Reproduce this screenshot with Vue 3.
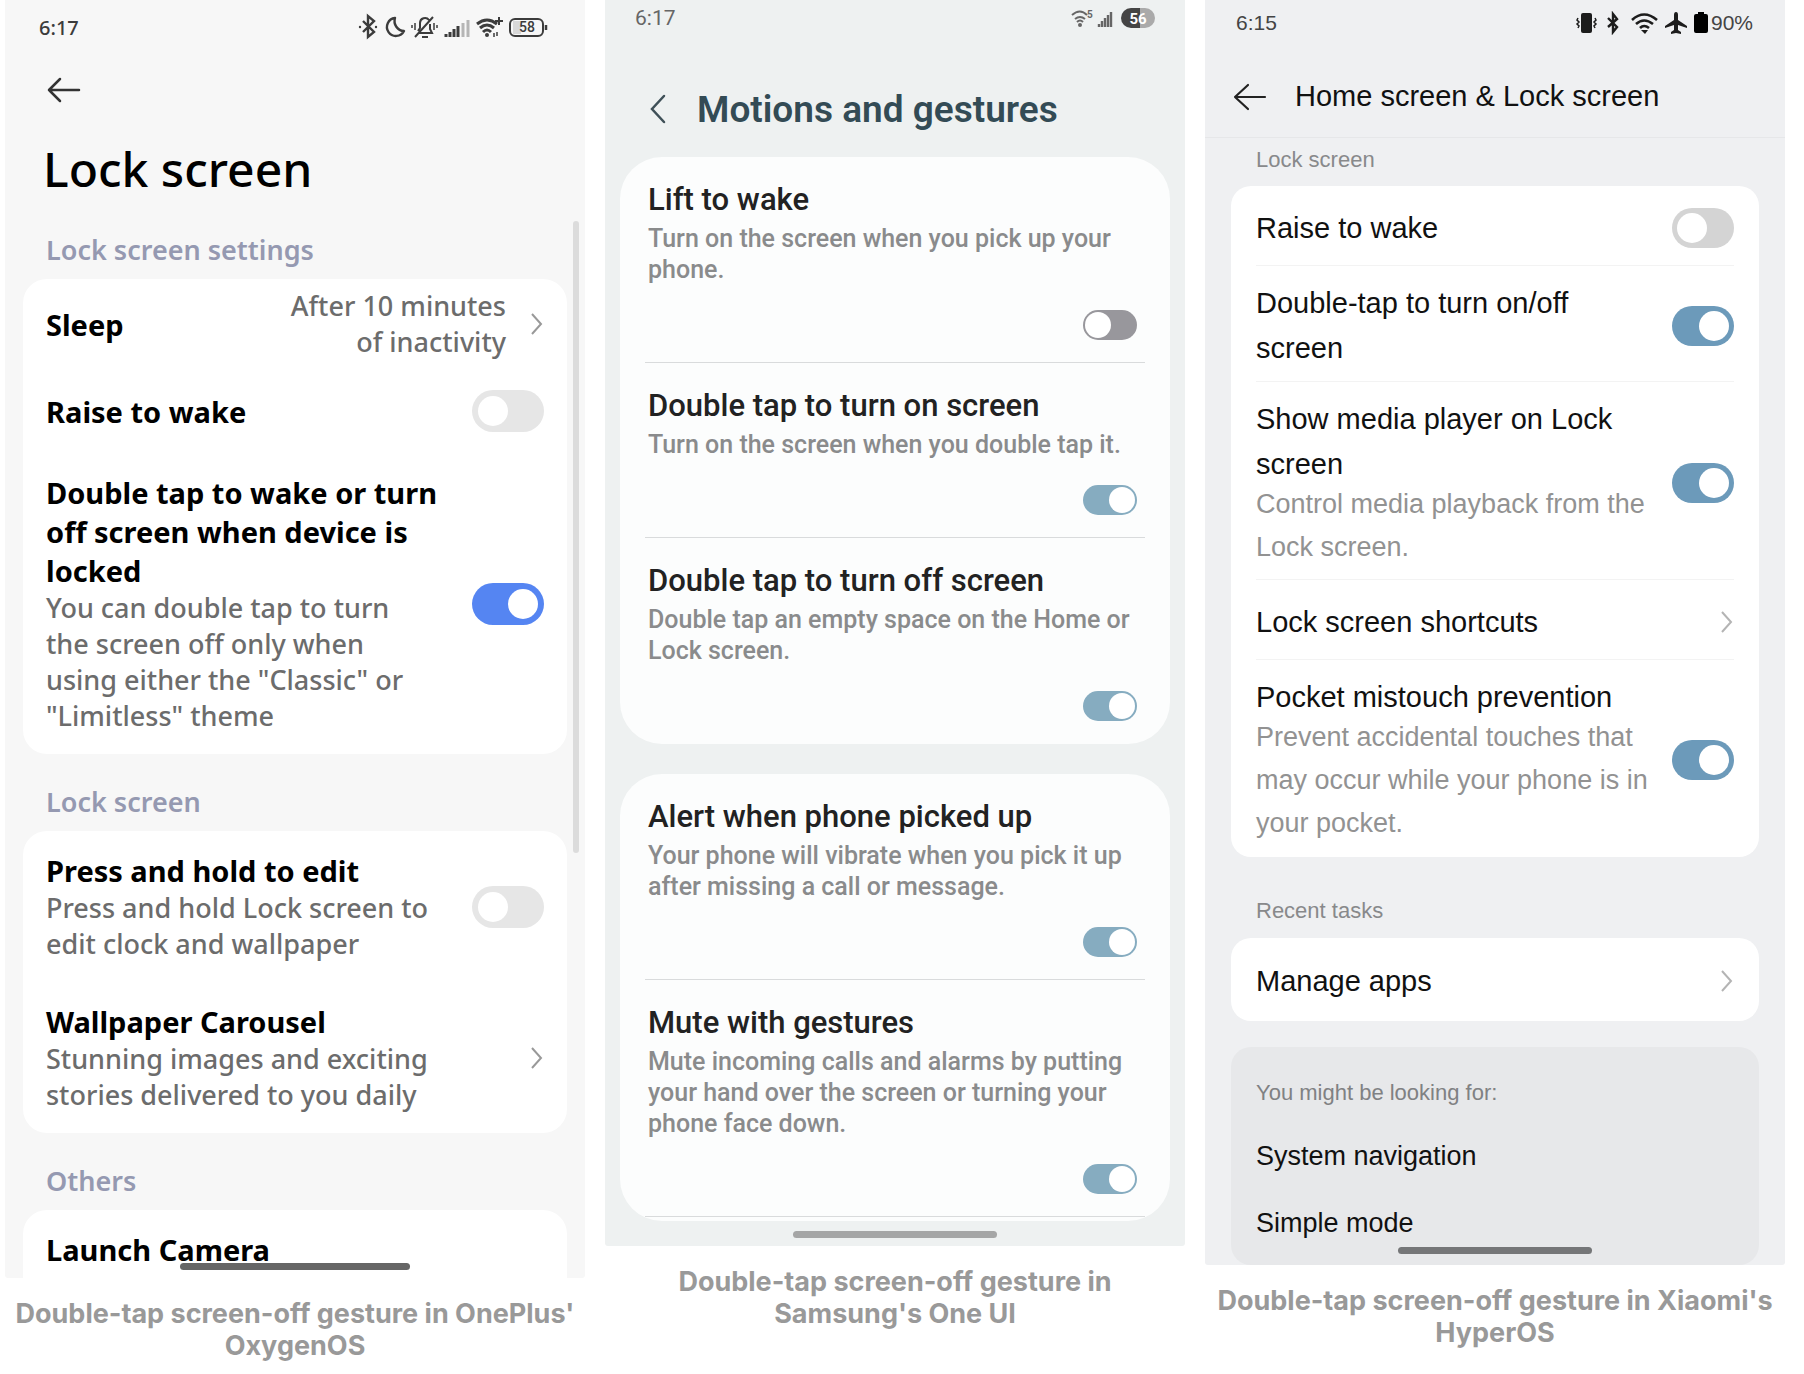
<script setup>
import { reactive } from 'vue';

const oxygenSections = reactive([
  {
    title: 'Lock screen settings',
    items: [
      { id: 'ox-sleep', title: 'Sleep', value: 'After 10 minutes of inactivity' },
      { id: 'ox-raise', title: 'Raise to wake', on: false },
      {
        id: 'ox-double',
        title: 'Double tap to wake or turn off screen when device is locked',
        desc: 'You can double tap to turn the screen off only when using either the "Classic" or "Limitless" theme',
        on: true,
      },
    ],
  },
  {
    title: 'Lock screen',
    items: [
      {
        id: 'ox-press',
        title: 'Press and hold to edit',
        desc: 'Press and hold Lock screen to edit clock and wallpaper',
        on: false,
      },
      {
        id: 'ox-carousel',
        title: 'Wallpaper Carousel',
        desc: 'Stunning images and exciting stories delivered to you daily',
      },
    ],
  },
]);

const oneUiGroups = reactive([
  [
    {
      id: 'ui-lift',
      title: 'Lift to wake',
      desc: 'Turn on the screen when you pick up your phone.',
      on: false,
    },
    {
      id: 'ui-on',
      title: 'Double tap to turn on screen',
      desc: 'Turn on the screen when you double tap it.',
      on: true,
    },
    {
      id: 'ui-off',
      title: 'Double tap to turn off screen',
      desc: 'Double tap an empty space on the Home or Lock screen.',
      on: true,
    },
  ],
  [
    {
      id: 'ui-alert',
      title: 'Alert when phone picked up',
      desc: 'Your phone will vibrate when you pick it up after missing a call or message.',
      on: true,
    },
    {
      id: 'ui-mute',
      title: 'Mute with gestures',
      desc: 'Mute incoming calls and alarms by putting your hand over the screen or turning your phone face down.',
      on: true,
    },
  ],
]);

const hyperSections = reactive([
  {
    title: 'Lock screen',
    items: [
      { id: 'hy-raise', title: 'Raise to wake', on: false },
      { id: 'hy-double', title: 'Double-tap to turn on/off screen', on: true },
      {
        id: 'hy-media',
        title: 'Show media player on Lock screen',
        desc: 'Control media playback from the Lock screen.',
        on: true,
      },
      { id: 'hy-short', title: 'Lock screen shortcuts' },
      {
        id: 'hy-pocket',
        title: 'Pocket mistouch prevention',
        desc: 'Prevent accidental touches that may occur while your phone is in your pocket.',
        on: true,
      },
    ],
  },
  {
    title: 'Recent tasks',
    items: [{ id: 'hy-manage', title: 'Manage apps' }],
  },
]);

const suggestions = ['System navigation', 'Simple mode'];
</script>

<template>
  <main class="gallery">
    <figure>
      <section class="phone oxygen">
        <div class="status">
          <span class="time">6:17</span>
          <svg width="192" height="28" viewBox="0 0 192 28" fill="none" stroke="#3c3c3c" stroke-width="2">
            <path d="M5 8l11 11-6 5V3l6 5L5 19" stroke-width="2.4" />
            <circle cx="2" cy="14" r="1.2" fill="#3c3c3c" stroke="none" />
            <circle cx="18" cy="14" r="1.2" fill="#3c3c3c" stroke="none" />
            <path d="M37 5a9 9 0 1 0 9 13a10 10 0 0 1-9-13z" stroke-width="2.4" stroke-linejoin="round" />
            <path d="M60 20h14l-2-4v-5M60 18l2-3v-5a5 5 0 0 1 9-3M57 24L75 4M64 24h6" />
            <path d="M57 10v7M54 12v3M76 10v7M79 12v3" stroke-width="1.5" />
            <path d="M88 21v3M92 19v5M96 16v8M100 13v11" stroke-width="3" />
            <path d="M105 10v14M110 7v17" stroke="#b5b5b5" stroke-width="3" />
            <path d="M119 11q10-8 20 0M122 15q7-6 14 0M125 19q4-4 8 0" stroke-width="3" />
            <circle cx="129" cy="22" r="2" fill="#3c3c3c" stroke="none" />
            <path d="M141 4v8M137 8h8" />
            <path d="M136 20v4M139 19v4" stroke-width="1.5" />
            <rect x="155" y="8" width="8" height="13" fill="#d8d8d8" stroke="none" />
            <rect x="152" y="6" width="33" height="17" rx="5" />
            <path d="M188 12v5" stroke-width="2.5" />
            <text x="169" y="19" class="battery-text" fill="#3c3c3c" stroke="none">58</text>
          </svg>
        </div>
        <div class="back-row">
          <button type="button" aria-label="Back">
            <svg width="34" height="26" viewBox="0 0 34 26" fill="none" stroke="#333" stroke-width="2.5" stroke-linecap="round" stroke-linejoin="round">
              <path d="M13 2L2 13l11 11M2 13h30" />
            </svg>
          </button>
        </div>
        <h1>Lock screen</h1>
        <div class="scrollbar"></div>
        <template v-for="section in oxygenSections" :key="section.title">
          <h2>{{ section.title }}</h2>
          <div class="card">
            <component
              :is="item.on === undefined ? 'a' : 'label'"
              v-for="item in section.items"
              :key="item.id"
              class="row"
              :class="{ 'with-value': item.value }"
              :href="item.on === undefined ? '#' : null"
              :for="item.on === undefined ? null : item.id"
            >
              <span class="text">
                <span class="title">{{ item.title }}</span>
                <span v-if="item.desc" class="desc">{{ item.desc }}</span>
              </span>
              <span v-if="item.value" class="value">{{ item.value }}</span>
              <input v-if="item.on !== undefined" :id="item.id" v-model="item.on" type="checkbox" class="switch" />
              <svg v-else class="chevron" width="14" height="24" viewBox="0 0 14 24" fill="none" stroke="#999" stroke-width="2">
                <path d="M2 2l9 10-9 10" />
              </svg>
            </component>
          </div>
        </template>
        <h2>Others</h2>
        <div class="card cut">
          <a href="#" class="row"><span class="title">Launch Camera</span></a>
        </div>
        <div class="home-bar"></div>
      </section>
      <figcaption>Double-tap screen-off gesture in OnePlus' OxygenOS</figcaption>
    </figure>

    <figure>
      <section class="phone oneui">
        <div class="status">
          <span class="time">6:17</span>
          <svg width="84" height="24" viewBox="0 0 84 24" fill="none" stroke="#666">
            <path d="M1 9q8-7 15 0M4 13q5-4 10 0M6 16q3-3 6 0" stroke-width="2" />
            <circle cx="9" cy="19" r="2" fill="#666" stroke="none" />
            <text x="16" y="12" class="wifi-text" fill="#666" stroke="none">5</text>
            <path d="M28 18v3M31 15v6M34 12v9M37 9v12M40 6v15" stroke-width="2.4" />
            <path d="M60 2a10 10 0 0 0 0 20h9V2z" fill="#444" stroke="none" />
            <path d="M69 2h5a10 10 0 0 1 0 20h-5z" fill="#aaa" stroke="none" />
            <text x="67" y="18" class="battery-text" fill="#fff" stroke="none">56</text>
          </svg>
        </div>
        <header>
          <button type="button" aria-label="Back">
            <svg width="18" height="30" viewBox="0 0 18 30" fill="none" stroke="#3f5058" stroke-width="2.5" stroke-linecap="round">
              <path d="M15 2L3 15l12 13" />
            </svg>
          </button>
          <h1>Motions and gestures</h1>
        </header>
        <div v-for="(group, index) in oneUiGroups" :key="index" class="card" :class="{ cut: index === 1 }">
          <label v-for="item in group" :key="item.id" class="row" :for="item.id">
            <span class="title">{{ item.title }}</span>
            <span class="desc">{{ item.desc }}</span>
            <input :id="item.id" v-model="item.on" type="checkbox" class="switch" />
          </label>
        </div>
        <div class="home-bar"></div>
      </section>
      <figcaption>Double-tap screen-off gesture in Samsung's One UI</figcaption>
    </figure>

    <figure>
      <section class="phone hyper">
        <div class="status">
          <span class="time">6:15</span>
          <svg width="134" height="24" viewBox="0 0 134 24" fill="none" stroke="#1c1c1c" stroke-width="2">
            <rect x="6" y="2" width="11" height="20" rx="2" fill="#1c1c1c" stroke="none" />
            <path d="M3 7l-1 2 2 2-2 2 2 2-1 2M20 7l1 2-2 2 2 2-2 2 1 2" stroke-width="1.5" />
            <path d="M33 7l9 9-4 5V3l4 5-9 8" stroke-width="2.4" />
            <path d="M57 9q12-11 25 0M61 13q8-7 17 0M65 17q4-4 9 0" stroke-width="2.6" />
            <path d="M66 19h7l-3 4z" fill="#1c1c1c" stroke="none" />
            <path d="M101 1q2 0 2 3v5l9 6v2l-9-3v5l3 2v2l-5-1-5 1v-2l3-2v-5l-9 3v-2l9-6V4q0-3 2-3z" fill="#1c1c1c" stroke="none" />
            <path d="M121 3h2V1h6v2h2q2 0 2 2v15q0 2-2 2h-10q-2 0-2-2V5q0-2 2-2z" fill="#000" stroke="none" />
          </svg>
          <span class="percent">90%</span>
        </div>
        <header>
          <button type="button" aria-label="Back">
            <svg width="34" height="28" viewBox="0 0 34 28" fill="none" stroke="#222" stroke-width="2.2" stroke-linecap="round" stroke-linejoin="round">
              <path d="M15 2L2 14l13 12M2 14h30" />
            </svg>
          </button>
          <h1>Home screen &amp; Lock screen</h1>
        </header>
        <template v-for="section in hyperSections" :key="section.title">
          <h2>{{ section.title }}</h2>
          <div class="card">
            <component
              :is="item.on === undefined ? 'a' : 'label'"
              v-for="item in section.items"
              :key="item.id"
              class="row"
              :href="item.on === undefined ? '#' : null"
              :for="item.on === undefined ? null : item.id"
            >
              <span class="text">
                <span class="title">{{ item.title }}</span>
                <span v-if="item.desc" class="desc">{{ item.desc }}</span>
              </span>
              <input v-if="item.on !== undefined" :id="item.id" v-model="item.on" type="checkbox" class="switch" />
              <svg v-else class="chevron" width="14" height="24" viewBox="0 0 14 24" fill="none" stroke="#b4b4b4" stroke-width="2">
                <path d="M2 2l9 10-9 10" />
              </svg>
            </component>
          </div>
        </template>
        <div class="suggest">
          <h3>You might be looking for:</h3>
          <a v-for="name in suggestions" :key="name" href="#">{{ name }}</a>
        </div>
        <div class="home-bar"></div>
      </section>
      <figcaption>Double-tap screen-off gesture in Xiaomi's HyperOS</figcaption>
    </figure>
  </main>
</template>

<style>
body {
  margin: 0;
  background: #fff;
}
</style>

<style scoped>
.gallery {
  display: grid;
  grid-template-columns: repeat(3, 1fr);
  align-items: start;
  gap: 20px;
  padding: 0 19px 0 5px;
}
figure {
  margin: 0;
}
figcaption {
  margin-top: 20px;
  color: #999;
  font: 700 27px/32px Inter, sans-serif;
  text-align: center;
}
h1,
h2,
h3 {
  margin: 0;
}
a {
  color: inherit;
  text-decoration: none;
}
button {
  display: flex;
  padding: 0;
  border: 0;
  background: none;
  cursor: pointer;
}
.phone {
  position: relative;
  overflow: hidden;
  border-radius: 0 0 3px 3px;
}
.status {
  display: flex;
  align-items: center;
}
.time {
  margin-right: auto;
}
.text {
  flex: 1;
  min-width: 0;
}
.title,
.desc {
  display: block;
}
.chevron {
  flex: none;
}
.home-bar {
  position: absolute;
  left: 50%;
  height: 7px;
  border-radius: 4px;
  transform: translateX(-50%);
}

/* switches */
.switch {
  display: flex;
  flex: none;
  align-items: center;
  box-sizing: border-box;
  margin: 0;
  border-radius: 21px;
  appearance: none;
  cursor: pointer;
}
.switch::before {
  content: '';
  width: 30px;
  height: 30px;
  border-radius: 50%;
  background: #fff;
}
.switch:checked {
  justify-content: flex-end;
}

/* OxygenOS */
.oxygen {
  background: #f7f7f7;
  color: #000;
  font-family: 'Noto Sans', sans-serif;
}
.oxygen .status {
  height: 54px;
  padding: 0 35px 0 34px;
  color: #3c3c3c;
  font-size: 20px;
  font-weight: 500;
}
.oxygen .battery-text {
  font: 500 14px Roboto, sans-serif;
  text-anchor: middle;
}
.oxygen .back-row {
  display: flex;
  align-items: center;
  height: 72px;
  padding: 0 42px;
}
.oxygen h1 {
  padding: 13px 38px 3px;
  font-size: 48px;
  font-weight: 500;
  line-height: 60px;
}
.oxygen h2 {
  padding: 28px 41px 10px;
  color: #9599b1;
  font-size: 27px;
  font-weight: 600;
  line-height: 39px;
}
.oxygen .card {
  margin: 0 18px;
  border-radius: 24px;
  background: #fff;
}
.oxygen .row {
  display: flex;
  align-items: center;
  box-sizing: border-box;
  min-height: 84px;
  padding: 20px 23px;
}
.oxygen .with-value {
  padding-top: 9px;
  padding-bottom: 9px;
}
.oxygen .title {
  max-width: 410px;
  font-size: 29px;
  font-weight: 700;
  line-height: 39px;
}
.oxygen .desc,
.oxygen .value {
  max-width: 388px;
  color: #6c6c6c;
  font-size: 27px;
  font-weight: 500;
  line-height: 36px;
}
.oxygen .value {
  width: 220px;
  margin-right: 24px;
  text-align: right;
}
.oxygen .switch {
  width: 72px;
  height: 42px;
  padding: 0 6px;
  background: #e6e6e6;
}
.oxygen .switch:checked {
  background: #5585f2;
}
.oxygen .cut {
  border-radius: 24px 24px 0 0;
}
.oxygen .cut .row {
  min-height: 0;
  padding-bottom: 9px;
}
.oxygen .home-bar {
  bottom: 8px;
  width: 230px;
  background: #666;
}
.scrollbar {
  position: absolute;
  top: 221px;
  right: 6px;
  width: 6px;
  height: 632px;
  border-radius: 3px;
  background: #dcdcdc;
}

/* One UI */
.oneui {
  background: #eef1f1;
  color: #222;
  font-family: Roboto, sans-serif;
}
.oneui .status {
  height: 35px;
  padding: 0 30px;
  color: #666;
  font-size: 21px;
}
.oneui .battery-text {
  font: 700 15px Roboto, sans-serif;
  text-anchor: middle;
}
.oneui .wifi-text {
  font: 700 10px Roboto, sans-serif;
}
.oneui header {
  display: flex;
  align-items: center;
  gap: 30px;
  box-sizing: border-box;
  height: 122px;
  padding: 26px 44px 0;
}
.oneui h1 {
  color: #334b55;
  font-size: 37px;
  font-weight: 600;
}
.oneui .card {
  margin: 0 15px 30px;
  border-radius: 42px;
  background: #fcfdfd;
}
.oneui .row {
  display: flex;
  flex-direction: column;
  margin: 0 25px;
  padding: 25px 0 22px 3px;
  border-bottom: 1px solid #d9dbdc;
}
.oneui .row:last-child {
  border-color: transparent;
}
.oneui .title {
  font-size: 31px;
  font-weight: 500;
  line-height: 36px;
}
.oneui .desc {
  margin: 5px 0 25px;
  color: #8a8b8c;
  font-size: 25px;
  font-weight: 500;
  line-height: 31px;
}
.oneui .switch {
  align-self: flex-end;
  width: 54px;
  height: 30px;
  margin-right: 8px;
  padding: 0 2px;
  background: #98979c;
}
.oneui .switch::before {
  width: 26px;
  height: 26px;
}
.oneui .switch:checked {
  background: #86acc0;
}
.oneui .cut {
  margin-bottom: 0;
  padding-bottom: 4px;
}
.oneui .cut .row:last-child {
  border-color: #d9dbdc;
}
.oneui::after {
  content: '';
  display: block;
  height: 25px;
}
.oneui .home-bar {
  bottom: 8px;
  width: 204px;
  background: #a5a6a6;
}

/* HyperOS */
.hyper {
  background: #eff0f2;
  color: #111;
  font-family: 'Liberation Sans', Arial, sans-serif;
}
.hyper .status {
  gap: 2px;
  height: 46px;
  padding: 0 32px 0 31px;
  color: #444;
  font-size: 21px;
}
.hyper header {
  display: flex;
  align-items: center;
  gap: 28px;
  box-sizing: border-box;
  height: 92px;
  padding: 10px 28px 0;
  border-bottom: 1px solid #e6e7e9;
}
.hyper h1 {
  font-size: 29px;
  font-weight: 400;
}
.hyper h2 {
  padding: 39px 51px 12px;
  color: #88898b;
  font-size: 22px;
  font-weight: 400;
  line-height: 30px;
}
.hyper header + h2 {
  padding-top: 7px;
  padding-bottom: 11px;
}
.hyper .card {
  margin: 0 26px;
  border-radius: 20px;
  background: #fff;
}
.hyper .row {
  display: flex;
  align-items: center;
  box-sizing: border-box;
  min-height: 80px;
  margin: 0 25px;
  padding: 15px 0 10px;
  border-bottom: 1px solid #f3f3f3;
}
.hyper .row:last-child {
  min-height: 83px;
  padding-bottom: 12px;
  border: 0;
}
.hyper .title {
  max-width: 390px;
  font-size: 29px;
  line-height: 45px;
}
.hyper .desc {
  margin-top: -4px;
  color: #929292;
  font-size: 27px;
  line-height: 43px;
}
.hyper .switch {
  width: 62px;
  height: 40px;
  margin-left: 14px;
  padding: 0 5px;
  background: #d4d4d4;
}
.hyper .switch:checked {
  background: #6c9aba;
}
.suggest {
  display: flex;
  flex-direction: column;
  gap: 30px;
  margin: 26px 26px 0;
  padding: 31px 25px 23px;
  border-radius: 20px;
  background: #e7e8ea;
  font-size: 27px;
  line-height: 37px;
}
.suggest h3 {
  color: #808183;
  font-size: 22px;
  font-weight: 400;
  line-height: 30px;
}
.hyper .home-bar {
  bottom: 11px;
  width: 194px;
  background: #757678;
}
</style>
